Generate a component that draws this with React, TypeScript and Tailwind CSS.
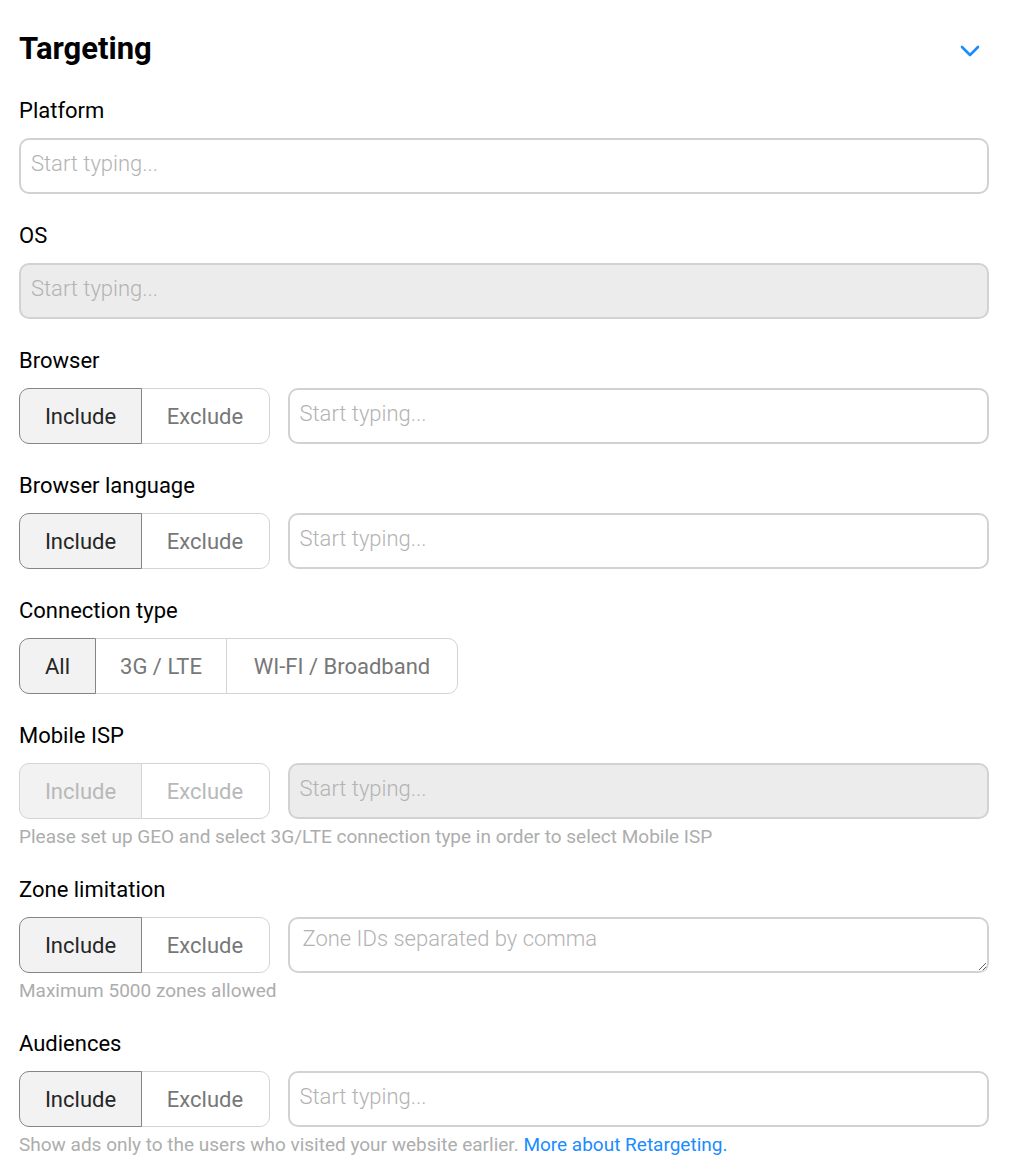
import { useState } from "react"

type Opt = { label: string; w: string }

const INC_EXC: Opt[] = [
  { label: "Include", w: "w-[123px]" },
  { label: "Exclude", w: "w-[129px]" },
]

const CONN: Opt[] = [
  { label: "All", w: "w-[77px]" },
  { label: "3G / LTE", w: "w-[133px]" },
  { label: "WI-FI / Broadband", w: "w-[232px]" },
]

function Label({ children }: { children: React.ReactNode }) {
  return <div className="text-[22px] leading-6 text-black">{children}</div>
}

function Help({ children }: { children: React.ReactNode }) {
  return <div className="mt-[7px] text-[19px] leading-[22px] text-[#adadad]">{children}</div>
}

function Segmented({ options, disabled }: { options: Opt[]; disabled?: boolean }) {
  const [active, setActive] = useState(0)
  return (
    <div className="flex h-[56px] shrink-0">
      {options.map((o, i) => {
        const first = i === 0
        const last = i === options.length - 1
        const on = i === active
        return (
          <button
            key={o.label}
            type="button"
            disabled={disabled}
            onClick={() => setActive(i)}
            className={`${o.w} h-full text-[22px] border-[1.5px] ${first ? "rounded-l-[10px]" : "-ml-[1.5px]"} ${
              last ? "rounded-r-[10px]" : ""
            } ${
              disabled
                ? `border-[#d4d4d4] text-[#b8b8b8] ${on ? "bg-[#f2f2f2]" : "bg-white"}`
                : on
                  ? "relative z-10 border-[#858585] bg-[#f2f2f2] text-[#262626]"
                  : "border-[#d4d4d4] bg-white text-[#777]"
            }`}
          >
            {o.label}
          </button>
        )
      })}
    </div>
  )
}

function TextInput({ disabled, placeholder = "Start typing..." }: { disabled?: boolean; placeholder?: string }) {
  return (
    <input
      disabled={disabled}
      placeholder={placeholder}
      className={`h-[56px] w-full min-w-0 rounded-[10px] border-2 border-[#d2d2d2] px-[10px] pb-[6px] text-[22px] font-light outline-none placeholder:text-[#b3b3b3] ${
        disabled ? "bg-[#ececec]" : "bg-white"
      }`}
    />
  )
}

function Section({ label, children, help }: { label: string; children: React.ReactNode; help?: React.ReactNode }) {
  return (
    <div className="mt-[30px] first:mt-0">
      <Label>{label}</Label>
      <div className="mt-[15px] flex gap-[18px]">{children}</div>
      {help && <Help>{help}</Help>}
    </div>
  )
}

export default function App() {
  return (
    <div className="min-h-screen bg-white pl-[19px] pr-[21px] pt-[31px] font-['Roboto',sans-serif]">
      <div className="flex items-center justify-between">
        <h2 className="text-[31px] font-bold leading-9 text-black">Targeting</h2>
        <svg width="20" height="12" viewBox="0 0 20 12" className="mr-[9px] mt-1" fill="none">
          <path d="M2 2l8 8 8-8" stroke="#1a8cff" strokeWidth="2.6" strokeLinecap="round" strokeLinejoin="round" />
        </svg>
      </div>

      <div className="mt-[32px]">
        <Section label="Platform">
          <TextInput />
        </Section>
        <Section label="OS">
          <TextInput disabled />
        </Section>
        <Section label="Browser">
          <Segmented options={INC_EXC} />
          <TextInput />
        </Section>
        <Section label="Browser language">
          <Segmented options={INC_EXC} />
          <TextInput />
        </Section>
        <Section label="Connection type">
          <Segmented options={CONN} />
        </Section>
        <Section
          label="Mobile ISP"
          help="Please set up GEO and select 3G/LTE connection type in order to select Mobile ISP"
        >
          <Segmented options={INC_EXC} disabled />
          <TextInput disabled />
        </Section>
        <Section label="Zone limitation" help="Maximum 5000 zones allowed">
          <Segmented options={INC_EXC} />
          <textarea
            placeholder="Zone IDs separated by comma"
            className="h-[56px] w-full min-w-0 resize-y rounded-[10px] border-2 border-[#d2d2d2] bg-white px-[13px] pt-[8px] text-[22px] font-light leading-6 outline-none placeholder:text-[#b3b3b3]"
          />
        </Section>
        <Section
          label="Audiences"
          help={
            <>
              Show ads only to the users who visited your website earlier.{" "}
              <a href="#" className="text-[#1a8cff]">
                More about Retargeting.
              </a>
            </>
          }
        >
          <Segmented options={INC_EXC} />
          <TextInput />
        </Section>
      </div>
    </div>
  )
}
